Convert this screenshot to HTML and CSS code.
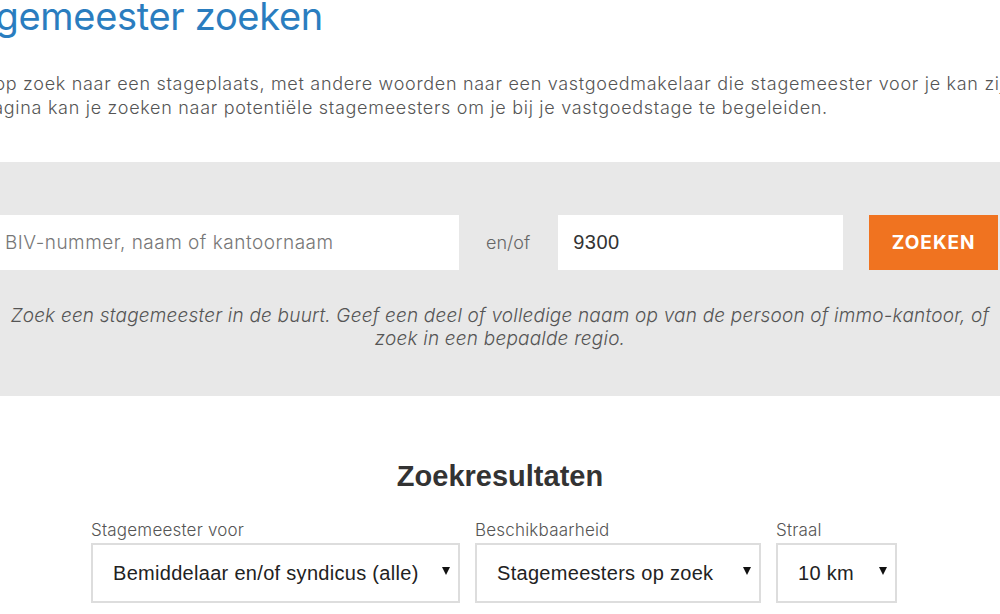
FILE: index.html
```html
<!DOCTYPE html>
<html lang="nl">
<head>
    <meta charset="UTF-8">
    <meta name="viewport" content="width=device-width, initial-scale=1.0">
    <title>Stagemeester zoeken</title>
    <link rel="stylesheet" href="styles.css">
</head>
<body>
    <section class="intro">
        <h1 class="page-title">Stagemeester zoeken</h1>
        <p class="intro-text">
            Ben je op zoek naar een stageplaats, met andere woorden naar een vastgoedmakelaar die stagemeester voor je kan zijn? Op<br>
            deze pagina kan je zoeken naar potentiële stagemeesters om je bij je vastgoedstage te begeleiden.
        </p>
    </section>

    <section class="search-panel">
        <form class="search-row">
            <input type="text" class="search-input name-input" placeholder="BIV-nummer, naam of kantoornaam">
            <span class="search-sep">en/of</span>
            <input type="text" class="search-input zip-input" value="9300">
            <button type="button" class="search-btn">ZOEKEN</button>
        </form>
        <p class="search-help">
            Zoek een stagemeester in de buurt. Geef een deel of volledige naam op van de persoon of immo-kantoor, of zoek in een bepaalde regio.
        </p>
    </section>

    <section class="results">
        <h2 class="results-title">Zoekresultaten</h2>
        <div class="filters">
            <div class="filter filter-type">
                <label class="filter-label">Stagemeester voor</label>
                <div class="select-box">
                    <span>Bemiddelaar en/of syndicus (alle)</span>
                    <span class="arrow"></span>
                </div>
            </div>
            <div class="filter filter-status">
                <label class="filter-label">Beschikbaarheid</label>
                <div class="select-box">
                    <span>Stagemeesters op zoek</span>
                    <span class="arrow"></span>
                </div>
            </div>
            <div class="filter filter-radius">
                <label class="filter-label">Straal</label>
                <div class="select-box">
                    <span>10 km</span>
                    <span class="arrow"></span>
                </div>
            </div>
        </div>
    </section>
</body>
</html>
```

FILE: styles.css
```css
/* Base styles */
* {
    margin: 0;
    padding: 0;
    box-sizing: border-box;
}

body {
    background-color: #fff;
    font-family: 'Inter', 'Open Sans', sans-serif;
    color: #555;
    overflow: hidden;
}

/* Intro */
.intro {
    margin-left: -62px;
    width: 1200px;
}

.page-title {
    font-size: 38px;
    font-weight: 400;
    color: #2a7dbf;
    line-height: 40px;
    margin-top: -4px;
    letter-spacing: -0.3px;
}

.intro-text {
    margin-top: 36px;
    margin-left: -6px;
    font-size: 18px;
    line-height: 24px;
    font-weight: 300;
    letter-spacing: 0.7px;
    color: #555;
    white-space: nowrap;
}

/* Search panel */
.search-panel {
    margin-top: 42px;
    background-color: #e8e8e8;
    height: 234px;
    padding-top: 53px;
}

.search-row {
    display: flex;
    align-items: center;
    margin-left: -14px;
}

.search-input {
    height: 55px;
    border: none;
    background: #fff;
    font-family: inherit;
    font-size: 19px;
    font-weight: 300;
    letter-spacing: 0.5px;
    color: #333;
    padding: 0 15px;
    outline: none;
}

.search-input::placeholder {
    color: #777;
}

.name-input {
    width: 473px;
    padding-left: 19px;
}

.search-sep {
    margin: 0 28px 0 27px;
    font-size: 18px;
    font-weight: 300;
    color: #666;
}

.zip-input {
    width: 285px;
    font-family: 'Liberation Sans', Arial, sans-serif;
    font-size: 20px;
    font-weight: 400;
}

.search-btn {
    margin-left: 26px;
    width: 129px;
    height: 55px;
    border: none;
    background: #f07320;
    color: #fff;
    font-family: inherit;
    font-size: 19px;
    font-weight: 700;
    letter-spacing: 1px;
    cursor: pointer;
}

.search-help {
    width: 1000px;
    margin: 34px auto 0;
    text-align: center;
    font-size: 19px;
    line-height: 23px;
    font-style: italic;
    font-weight: 300;
    letter-spacing: 0.2px;
    color: #555;
}

/* Results */
.results {
    padding-top: 64px;
}

.results-title {
    text-align: center;
    font-family: 'Liberation Sans', Arial, sans-serif;
    font-size: 29px;
    line-height: 33px;
    font-weight: 700;
    color: #333;
}

.filters {
    display: flex;
    gap: 15px;
    margin: 27px 0 0 91px;
}

.filter-label {
    display: block;
    font-size: 17px;
    font-weight: 300;
    letter-spacing: 0.2px;
    color: #555;
    line-height: 21px;
    margin-bottom: 2px;
}

.select-box {
    display: flex;
    justify-content: space-between;
    align-items: center;
    height: 60px;
    border: 2px solid #ddd;
    padding: 0 8px 0 20px;
    font-family: 'Liberation Sans', Arial, sans-serif;
    font-size: 20px;
    letter-spacing: 0.3px;
    color: #222;
}

.arrow {
    width: 0;
    height: 0;
    border-left: 4.5px solid transparent;
    border-right: 4.5px solid transparent;
    border-top: 8px solid #111;
    margin-bottom: 4px;
}

.filter-type .select-box {
    width: 369px;
}

.filter-status .select-box {
    width: 286px;
}

.filter-radius .select-box {
    width: 121px;
}
```
